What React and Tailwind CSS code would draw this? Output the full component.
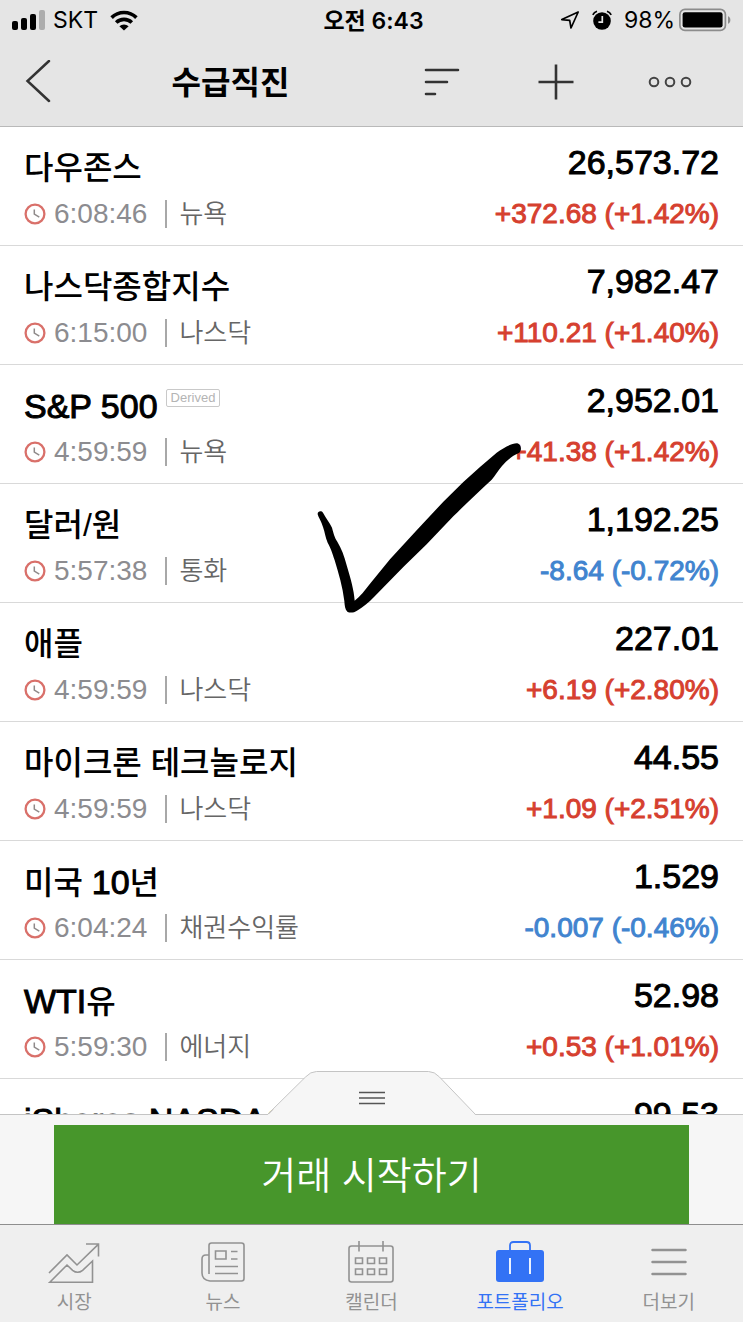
const quotes = [
  { name: "다우존스", time: "6:08:46", market: "뉴욕", price: "26,573.72", change: "+372.68 (+1.42%)" },
  { name: "나스닥종합지수", time: "6:15:00", market: "나스닥", price: "7,982.47", change: "+110.21 (+1.40%)" },
  { name: "S&P 500", badge: "Derived", time: "4:59:59", market: "뉴욕", price: "2,952.01", change: "+41.38 (+1.42%)" },
  { name: "달러/원", time: "5:57:38", market: "통화", price: "1,192.25", change: "-8.64 (-0.72%)" },
  { name: "애플", time: "4:59:59", market: "나스닥", price: "227.01", change: "+6.19 (+2.80%)" },
  { name: "마이크론 테크놀로지", time: "4:59:59", market: "나스닥", price: "44.55", change: "+1.09 (+2.51%)" },
  { name: "미국 10년", time: "6:04:24", market: "채권수익률", price: "1.529", change: "-0.007 (-0.46%)" },
  { name: "WTI유", time: "5:59:30", market: "에너지", price: "52.98", change: "+0.53 (+1.01%)" },
  { name: "iShares NASDAQ", time: "4:59:59", market: "나스닥", price: "99.53", change: "+1.12 (+1.14%)" },
];

const tabs = [
  { label: "시장", href: "#market", Icon: ChartIcon },
  { label: "뉴스", href: "#news", Icon: NewsIcon },
  { label: "캘린더", href: "#calendar", Icon: CalendarIcon },
  { label: "포트폴리오", href: "#portfolio", Icon: BriefcaseIcon, active: true },
  { label: "더보기", href: "#more", Icon: MenuIcon },
];

function SignalIcon() {
  return (
    <svg width="33" height="20" viewBox="0 0 33 20" aria-hidden="true">
      <rect x="0" y="11" width="6" height="9" rx="2" />
      <rect x="9" y="8" width="6" height="12" rx="2" />
      <rect x="18" y="4" width="6" height="16" rx="2" />
      <rect x="27" y="0" width="6" height="20" rx="2" fill="#adadad" />
    </svg>
  );
}

function WifiIcon() {
  return (
    <svg width="28" height="21" viewBox="0 0 28 21" fill="none" stroke="#000" strokeWidth="3.6" aria-hidden="true">
      <path d="M1.6 7.6a17.6 17.6 0 0 1 24.8 0" />
      <path d="M6.2 12.6a11 11 0 0 1 15.6 0" />
      <path d="M14 20.5l-4.6-4.2a6.6 6.6 0 0 1 9.2 0z" fill="#000" stroke="none" />
    </svg>
  );
}

function LocationIcon() {
  return (
    <svg width="20" height="20" viewBox="0 0 20 20" fill="none" stroke="#000" strokeWidth="1.7" strokeLinejoin="round" aria-hidden="true">
      <path d="M18.200 2L1.800 9.600l7.900.8L11 18z" />
    </svg>
  );
}

function AlarmIcon() {
  return (
    <svg width="20" height="20" viewBox="0 0 20 20" aria-hidden="true">
      <circle cx="10" cy="11" r="8.8" />
      <path d="M.8 4.8A7 7 0 0 1 5 1.2M19.2 4.8A7 7 0 0 0 15 1.2" fill="none" stroke="#000" strokeWidth="1.7" />
      <path d="M10.3 6v6.2H6.4" fill="none" stroke="#e5e5e5" strokeWidth="1.7" />
    </svg>
  );
}

function BatteryIcon() {
  return (
    <svg width="52" height="24" viewBox="0 0 52 24" aria-hidden="true">
      <rect x="0.9" y="1.4" width="45.5" height="21" rx="5" fill="none" stroke="#8c8c8c" strokeWidth="1.7" />
      <rect x="3.6" y="4.2" width="40" height="15.4" rx="2.4" />
      <path d="M49 8.3c3.2 1 3.2 6.2 0 7.4z" fill="#8c8c8c" />
    </svg>
  );
}

function ClockIcon() {
  return (
    <svg width="22" height="22" viewBox="0 0 22 22" fill="none" aria-hidden="true">
      <circle cx="11" cy="11" r="9.4" stroke="#d9706a" strokeWidth="2.300" />
      <path d="M10.300 6.500v4.700l5 3" stroke="#8f8a8a" strokeWidth="1.5" />
    </svg>
  );
}

function ChartIcon() {
  return (
    <svg width="52" height="44" viewBox="0 0 52 44" fill="none" stroke="currentColor" strokeWidth="1.6" aria-hidden="true">
      <path d="M1 32L19 14l10 10L50 3.600M38 3h12.500v12.500" />
      <path d="M1.800 41.200L19 24l5.600 5.300q5 4 10 0L44.500 20v21.200z" />
    </svg>
  );
}

function NewsIcon() {
  return (
    <svg width="44" height="44" viewBox="0 0 44 44" fill="none" stroke="currentColor" strokeWidth="1.6" aria-hidden="true">
      <path d="M8 33V4.500a2.500 2.500 0 0 1 2.500-2.500h30a2.500 2.500 0 0 1 2.500 2.500v33a2.500 2.500 0 0 1-2.500 2.500H9q-8-1-8-8V18q0-4 4-4h3" />
      <path d="M14.500 10h10.500v8H14.500zM30 10.500h6.500M30 18h6.500M14 25.500h23M14 32.500h23" />
    </svg>
  );
}

function CalendarIcon() {
  return (
    <svg width="46" height="44" viewBox="0 0 46 44" fill="none" stroke="currentColor" strokeWidth="1.6" aria-hidden="true">
      <rect x="1" y="5" width="44" height="36" rx="2.500" />
      <path d="M11 0v10.500M35 0v10.500" />
      <path d="M7.500 17h7v5.500h-7zM19.500 17h7v5.500h-7zM31.500 17h7v5.500h-7zM7.500 28h7v5.500h-7zM19.500 28h7v5.500h-7zM31.500 28h7v5.500h-7z" />
    </svg>
  );
}

function BriefcaseIcon() {
  return (
    <svg width="48" height="44" viewBox="0 0 48 44" aria-hidden="true">
      <path d="M14 12V4.500Q14 1 17.500 1h13Q34 1 34 4.500V12" fill="none" stroke="currentColor" strokeWidth="1.800" />
      <rect x="0" y="9" width="48" height="32" rx="3" fill="currentColor" />
      <path d="M14 17v16M34 17v16" stroke="#fff" strokeWidth="1.800" />
    </svg>
  );
}

function MenuIcon() {
  return (
    <svg width="36" height="44" viewBox="0 0 36 44" stroke="currentColor" strokeWidth="2.500" strokeLinecap="round" aria-hidden="true">
      <path d="M1.500 9h33M1.500 21h33M1.500 33h33" />
    </svg>
  );
}

function Header() {
  return (
    <header className="border-b border-[#b9b9b9] bg-[#e5e5e5]">
      <div className="grid h-10 grid-cols-[1fr_auto_1fr] items-center px-3 font-['Inter','Noto_Sans_CJK_KR',sans-serif] text-[23px]">
        <div className="flex items-center">
          <SignalIcon />
          <span className="mr-3 ml-2">SKT</span>
          <WifiIcon />
        </div>
        <span className="pt-0.5 pl-1 font-semibold">오전 6:43</span>
        <div className="flex items-center justify-end">
          <LocationIcon />
          <span className="mx-3">
            <AlarmIcon />
          </span>
          <span className="mr-1">98%</span>
          <BatteryIcon />
        </div>
      </div>

      <div className="flex h-[86px] items-center pr-4 pb-0.5">
        <button type="button" aria-label="뒤로" className="flex w-[76px] justify-center">
          <svg width="26" height="44" viewBox="0 0 26 44" fill="none" stroke="#333" strokeWidth="2.5" strokeLinecap="round">
            <path d="M24 1L2.500 21 24 41" />
          </svg>
        </button>
        <h1 className="flex-1 pt-0.5 text-center text-[32px] leading-10 font-bold">수급직진</h1>
        <button type="button" aria-label="정렬" className="flex w-[114px] justify-center">
          <svg width="36" height="36" viewBox="0 0 36 36" fill="none" stroke="#333" strokeWidth="2.600" strokeLinecap="round">
            <path d="M2 6h32M2 18h21M2 30h9" />
          </svg>
        </button>
        <button type="button" aria-label="추가" className="flex w-[114px] justify-center">
          <svg width="36" height="36" viewBox="0 0 36 36" fill="none" stroke="#333" strokeWidth="2.600">
            <path d="M.5 18h35M18 .5v35" />
          </svg>
        </button>
        <button type="button" aria-label="메뉴" className="flex w-[114px] justify-center">
          <svg width="44" height="12" viewBox="0 0 44 12" fill="none" stroke="#444" strokeWidth="2">
            <circle cx="6" cy="6" r="4.300" />
            <circle cx="22" cy="6" r="4.300" />
            <circle cx="38" cy="6" r="4.300" />
          </svg>
        </button>
      </div>
    </header>
  );
}

// Latin runs are a touch larger and heavier than the Hangul around them
function QuoteName({ name }) {
  return name.split(/([\w&]+(?: [\w&]+)*)/).map((part, index) =>
    index % 2 ? (
      <span key={index} className="text-[34px] [-webkit-text-stroke:1px]">
        {part}
      </span>
    ) : (
      part
    )
  );
}

function QuoteRow({ quote }) {
  const down = quote.change.startsWith("-");

  return (
    <li className="flex h-[119px] justify-between border-b border-[#d9d9d9] px-6">
      <div className="flex flex-col gap-1.5 pt-[21px]">
        <div className="flex h-10 items-start gap-2">
          <h2 className="text-[32px] leading-10 font-medium">
            <QuoteName name={quote.name} />
          </h2>
          {quote.badge && (
            <span className="mt-[3px] rounded-xs border border-[#c9c9c9] px-1 text-[13px] leading-4 text-[#b4b4b4]">
              {quote.badge}
            </span>
          )}
        </div>
        <div className="flex h-10 items-center">
          <ClockIcon />
          <time className="ml-2 text-[28px] leading-10 text-[#8c8c90]">{quote.time}</time>
          <span className="mr-3 ml-[18px] h-7 w-0.5 bg-[#a8a8a8]" />
          <span className="text-[26px] leading-10 font-[350] text-[#666]">{quote.market}</span>
        </div>
      </div>

      <div className="flex flex-col gap-3 pt-[15px] text-right">
        <p className="text-[34px] leading-10 [-webkit-text-stroke:1px]">{quote.price}</p>
        <p
          className={`text-[28px] leading-10 [-webkit-text-stroke:1px] ${
            down ? "text-[#4184cf]" : "text-[#d6402f]"
          }`}
        >
          {quote.change}
        </p>
      </div>
    </li>
  );
}

function CheckMark() {
  return (
    <svg className="pointer-events-none absolute top-[310px] left-[310px]" width="220" height="180" viewBox="0 0 660 540" aria-hidden="true">
      <path d="M39 227C34 219 22 222 23 232C25 241 34 253 39 270C45 287 46 301 53 317C62 334 67 347 74 370C86 410 98 450 103 492C104 506 105 518 112 524C120 529 132 527 141 521C160 511 176 496 192 480L280 390L350 322L430 238C470 198 510 160 545 128C556 117 564 100 576 87C592 69 608 55 628 47C636 39 634 22 622 19C605 18 580 33 560 47L510 90L460 135L400 194L320 280L240 367L180 440C165 460 150 478 134 491C132 460 122 425 110 385C103 357 94 334 82 314C73 300 71 290 66 272C59 257 48 243 39 227Z" />
    </svg>
  );
}

function TradePanel() {
  return (
    <section className="relative border-t border-[#c4c4c4] bg-[#f6f6f6] px-[54px] pt-2.5">
      <svg className="absolute -top-11 left-1/2 -translate-x-1/2" width="209" height="44" viewBox="0 0 209 44" fill="none" aria-hidden="true">
        <path d="M0 44L38 6Q43 .5 49 .5h112q6 0 11 5.500L208 44z" fill="#f6f6f6" />
        <path d="M0 43.500L38 6Q43 .5 49 .5h112q6 0 11 5.500L208 43.500" stroke="#c4c4c4" />
        <path d="M91.500 21.500h26M91.500 27h26M91.500 32.500h26" stroke="#555" strokeWidth="1.600" />
      </svg>
      <button type="button" className="h-[99px] w-full bg-[#47962b] pt-1 text-[38px] font-[350] text-white">
        거래 시작하기
      </button>
    </section>
  );
}

function TabBar() {
  return (
    <nav className="grid grid-cols-5 border-t border-[#8e8e8e] bg-[#efefef]">
      {tabs.map(({ label, href, Icon, active }) => (
        <a
          key={label}
          href={href}
          className={`flex h-[97px] flex-col items-center gap-1 pt-4 text-[19px] leading-7 ${
            active ? "text-[#3372f5]" : "text-[#929292]"
          }`}
        >
          <Icon />
          {label}
        </a>
      ))}
    </nav>
  );
}

export default function App() {
  return (
    <div className="flex h-screen flex-col bg-white font-['Liberation_Sans','Noto_Sans_CJK_KR',sans-serif] text-black">
      <Header />
      <main className="relative min-h-0 flex-1 overflow-hidden">
        <ul>
          {quotes.map((quote) => (
            <QuoteRow key={quote.name} quote={quote} />
          ))}
        </ul>
        <CheckMark />
      </main>
      <TradePanel />
      <TabBar />
    </div>
  );
}
